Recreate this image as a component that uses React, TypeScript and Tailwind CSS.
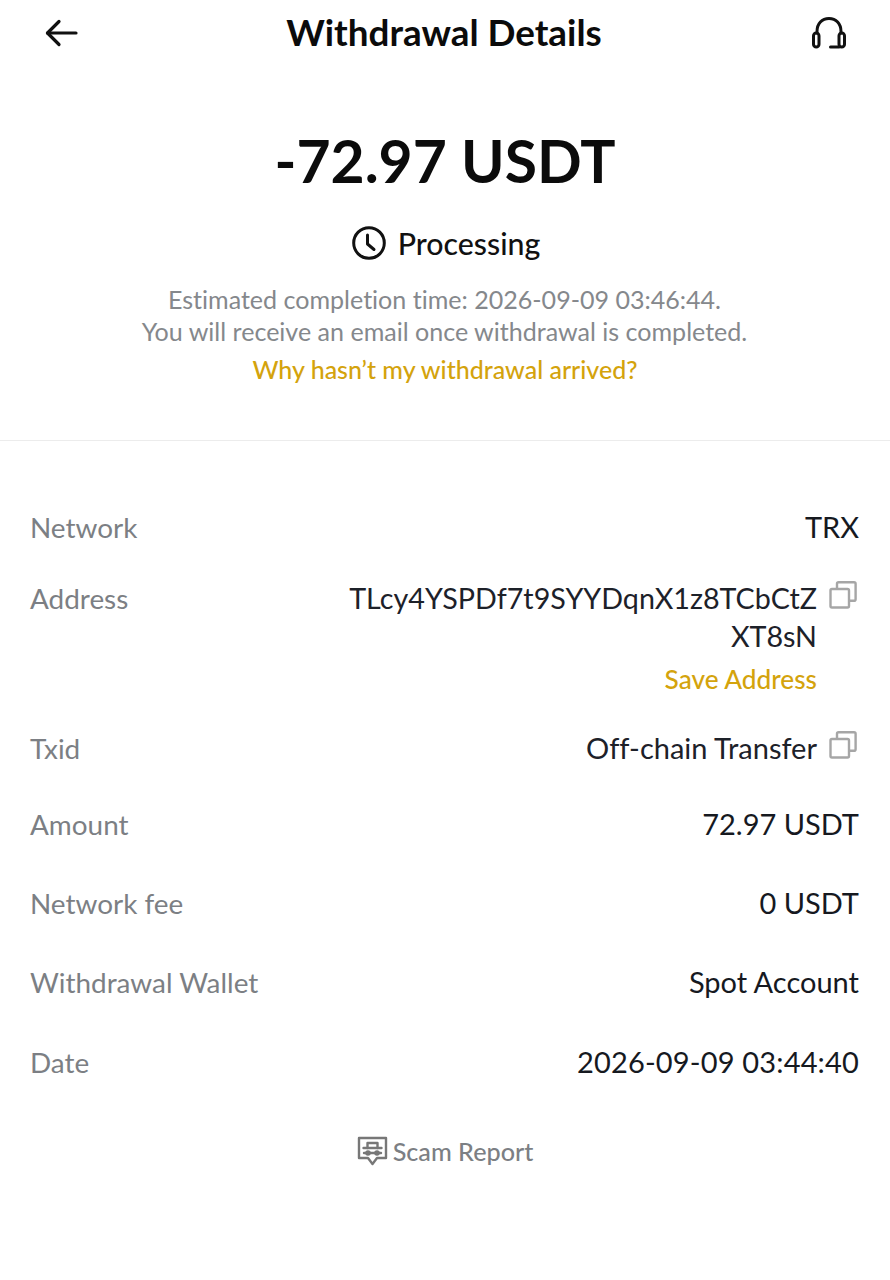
function CopyIcon() {
  return (
    <svg width="28" height="28" viewBox="0 0 28 28" fill="none" stroke="#a6a6a6" strokeWidth="2.4" className="shrink-0 mt-[1px] mr-[2px]">
      <rect x="1.5" y="8" width="18.5" height="18.5" rx="1.5" />
      <path d="M8 8V2.8C8 1.9 8.7 1.2 9.6 1.2H25C25.9 1.2 26.6 1.9 26.6 2.8V18.2C26.6 19.1 25.9 19.8 25 19.8H20" />
    </svg>
  );
}
function Row({ label, value, className, valueClass = "" }: { label: string; value: string; className: string; valueClass?: string }) {
  return (
    <div className={`flex justify-between items-start ${className}`}>
      <span className="text-[#7c7f84] text-[27.9px] ml-[-1px]">{label}</span>
      <span className={`text-[#16191f] ${valueClass}`}>{value}</span>
    </div>
  );
}
export default function App() {
  return (
    <div className="w-[890px] h-[1280px] bg-white overflow-hidden font-['Lato','Liberation_Sans',sans-serif] [font-variant-ligatures:none]">
      <header className="h-[66px] px-[44px] flex items-center justify-between">
        <svg width="36" height="30" viewBox="0 0 36 30" fill="none" stroke="#111" strokeWidth="3.2" strokeLinecap="round" strokeLinejoin="round">
          <path d="M3.5 15H32" />
          <path d="M15 3.5L3.5 15L15 26.5" />
        </svg>
        <h1 className="text-[36.8px] leading-[40px] font-bold text-[#0b0b0b] mt-[-2px] mr-[4px]">Withdrawal Details</h1>
        <svg width="34" height="32" viewBox="0 0 34 32" fill="none" stroke="#111" strokeWidth="3" strokeLinecap="round" strokeLinejoin="round">
          <path d="M5 16V14.5C5 6.5 10 1.5 17 1.5C24 1.5 29 6.5 29 14.5V16" />
          <rect x="1.5" y="16" width="5.5" height="14" rx="2.75" />
          <rect x="27" y="16" width="5.5" height="14" rx="2.75" />
          <path d="M18.5 30H27" />
        </svg>
      </header>
      <section className="h-[375px] flex flex-col items-center border-b border-[#ececec]">
        <div className="mt-[61px] text-[58.8px] leading-[68px] font-bold text-[#0b0b0b]">-72.97 USDT</div>
        <div className="mt-[30px] ml-[2px] flex items-center gap-[12px] h-[36px]">
          <svg width="34" height="34" viewBox="0 0 34 34" fill="none" stroke="#111" strokeWidth="3" strokeLinecap="round" strokeLinejoin="round">
            <circle cx="17" cy="17" r="15.3" />
            <path d="M15.5 9V18L22 23.5" />
          </svg>
          <span className="text-[30.3px] leading-[36px] font-medium text-[#111]">Processing</span>
        </div>
        <p className="mt-[22px] text-[25.05px] leading-[32px] text-center text-[#85888c] ml-[-1px]">
          Estimated completion time: 2026-09-09 03:46:44.
          <br />
          You will receive an email once withdrawal is completed.
        </p>
        <a className="mt-[6px] text-[25px] leading-[32px] font-medium text-[#d4a30c]">Why hasn’t my withdrawal arrived?</a>
      </section>
      <main className="px-[31px] text-[29px] leading-[36px]">
        <Row label="Network" value="TRX" className="mt-[68px]" />
        <div className="flex justify-between items-start mt-[35px]">
          <span className="text-[#7c7f84] text-[27.9px] ml-[-1px]">Address</span>
          <div className="flex gap-[12px]">
            <div className="w-[480px] flex flex-col items-end text-right">
              <span className="text-[#1d2129] text-[28.7px] leading-[38px] mt-[-1px]">TLcy4YSPDf7t9SYYDqnX1z8TCbCtZ<br />XT8sN</span>
              <a className="mt-[8px] text-[26.2px] leading-[32px] font-medium text-[#d4a30c]">Save Address</a>
            </div>
            <CopyIcon />
          </div>
        </div>
        <div className="flex justify-between items-start mt-[35px]">
          <span className="text-[#7c7f84] text-[27.9px] ml-[-1px]">Txid</span>
          <div className="flex gap-[12px]">
            <span className="text-[#1d2129]">Off-chain Transfer</span>
            <CopyIcon />
          </div>
        </div>
        <Row label="Amount" value="72.97 USDT" className="mt-[40px]" />
        <Row label="Network fee" value="0 USDT" className="mt-[43px]" />
        <Row label="Withdrawal Wallet" value="Spot Account" className="mt-[43px]" />
        <Row label="Date" value="2026-09-09 03:44:40" className="mt-[44px]" valueClass="tracking-[0.16px]" />
        <div className="mt-[54px] flex items-center justify-center gap-[5px] text-[#7c7f84]">
          <svg width="31" height="32" viewBox="0 0 31 32" fill="none" stroke="#777" strokeWidth="2.4" strokeLinecap="round" strokeLinejoin="round" className="mt-[2px]">
            <path d="M2 2H29V22H20L15.5 28L11 22H2Z" />
            <path d="M10.5 12V7H20.5V12" />
            <path d="M6.5 12H24.5" />
            <path d="M7 17H24" />
            <circle cx="11" cy="17" r="1.6" fill="#777" />
            <circle cx="20" cy="17" r="1.6" fill="#777" />
          </svg>
          <span className="text-[25.2px] leading-[32px] font-medium">Scam Report</span>
        </div>
      </main>
    </div>
  );
}
